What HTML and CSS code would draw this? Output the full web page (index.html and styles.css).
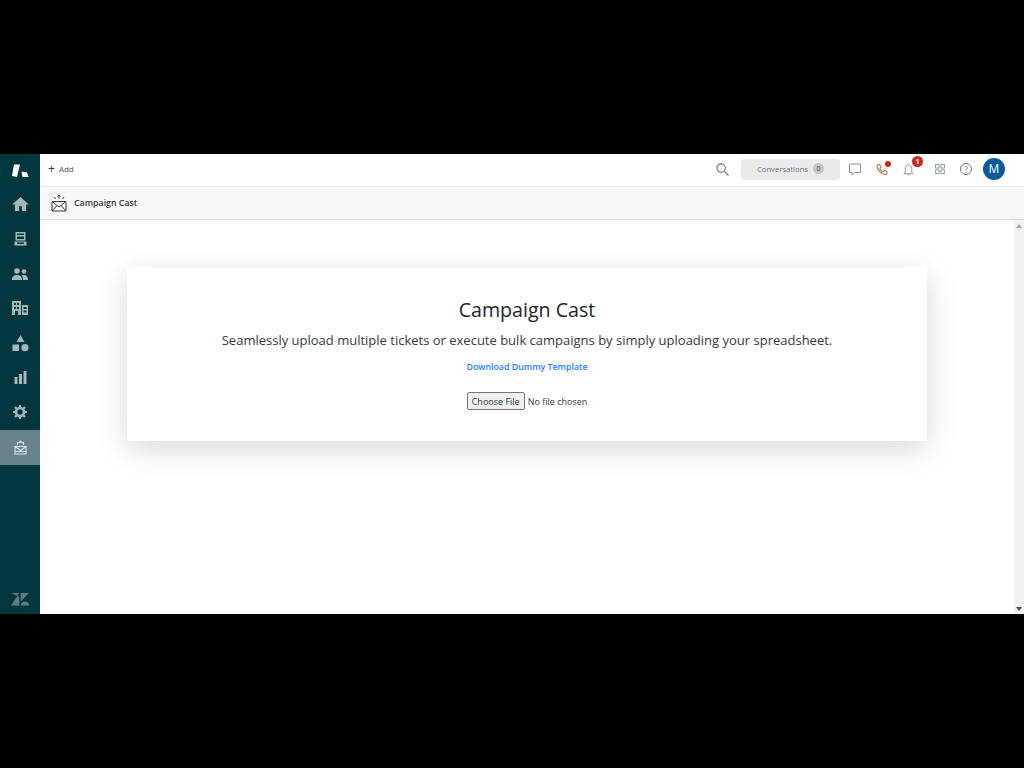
FILE: index.html
```html
<!DOCTYPE html>
<html lang="en">
<head>
  <meta charset="UTF-8">
  <title>Campaign Cast</title>
  <link rel="stylesheet" href="styles.css">
</head>
<body>
  <div class="app">
    <div class="sidebar">
      <div class="nav-item logo">
        <svg width="20" height="18" viewBox="0 0 20 18"><path d="M4 2.500 10 2.500 7 15 2 14Z" fill="#fff"/><path d="M11.500 9.500 17 10.500 18.500 15 12.500 15Z" fill="#fff"/></svg>
      </div>
      <div class="nav-item">
        <svg width="17" height="14" viewBox="0 0 18 15"><path d="M9 0 0 8H3V15H7.500V10H10.500V15H15V8H18Z" fill="#a6b7ba"/></svg>
      </div>
      <div class="nav-item">
        <svg width="13" height="14" viewBox="0 0 13 14"><path d="M1.500 0H11.500V8.500H1.500ZM3 1.500V3H10V1.500ZM3 4.500V7H10V4.500ZM0.500 9.500H12.500V13.500H0.500ZM3 10.500V12H10V10.500Z" fill="#a6b7ba" fill-rule="evenodd"/></svg>
      </div>
      <div class="nav-item">
        <svg width="16" height="12" viewBox="0 0 16 12"><circle cx="5" cy="3" r="2.800" fill="#a6b7ba"/><circle cx="12" cy="3.500" r="2.300" fill="#a6b7ba"/><path d="M0 12C0 8 2 7 5 7S10 8 10 12ZM11 12C11 9.500 10.500 8.500 9.500 7.500 10.500 7 11 7 12 7 14.500 7 16 8.500 16 12Z" fill="#a6b7ba"/></svg>
      </div>
      <div class="nav-item">
        <svg width="16" height="14" viewBox="0 0 16 14"><path d="M0 0H9V14H0ZM2 2V4H4V2ZM5 2V4H7V2ZM2 6V8H4V6ZM5 6V8H7V6ZM3 10V14H6V10ZM10 4H16V14H10ZM11.500 6V8H14.500V6ZM11.500 9.500V11.500H14.500V9.500Z" fill="#a6b7ba" fill-rule="evenodd"/></svg>
      </div>
      <div class="nav-item">
        <svg width="17" height="17" viewBox="0 0 17 17"><path d="M8.500 0 12.500 7H4.500Z" fill="#a6b7ba"/><rect x="0.500" y="9.500" width="6.500" height="6.500" fill="#a6b7ba"/><circle cx="13" cy="12.700" r="3.600" fill="#a6b7ba"/></svg>
      </div>
      <div class="nav-item">
        <svg width="13" height="13" viewBox="0 0 13 13"><rect x="0.500" y="6" width="3" height="7" fill="#a6b7ba"/><rect x="5" y="3" width="3" height="10" fill="#a6b7ba"/><rect x="9.500" y="0" width="3" height="13" fill="#a6b7ba"/></svg>
      </div>
      <div class="nav-item">
        <svg width="14" height="14" viewBox="0 0 14 14"><circle cx="7" cy="7" r="4" fill="none" stroke="#a6b7ba" stroke-width="2.600"/><path d="M7 0V2M7 12V14M0 7H2M12 7H14M2 2 3.400 3.400M10.600 10.600 12 12M12 2 10.600 3.400M3.400 10.600 2 12" stroke="#a6b7ba" stroke-width="2.200"/></svg>
      </div>
      <div class="nav-item active">
        <svg width="13" height="15" viewBox="0 0 13 15"><path d="M1 6.500H12V14H1ZM1 6.500 6.500 10.500 12 6.500M1 11.500H12M3.500 5V2.500H9.500V5" fill="none" stroke="#dfe6e7" stroke-width="1.100"/><circle cx="6.500" cy="1.500" r="1.100" fill="#dfe6e7"/></svg>
      </div>
      <div class="sidebar-foot">
        <svg width="18" height="13" viewBox="0 0 18 13"><path d="M0 0H8.300L0 12.500H8.300V4ZM9.700 0H18L9.700 8.500ZM9.700 12.500C10 10 11.800 8.500 14 8.500S18 10 18 12.500Z" fill="#5f7c82" fill-rule="evenodd"/></svg>
      </div>
    </div>
    <div class="main">
      <div class="topbar">
        <div class="add-btn"><span class="plus">+</span><span>Add</span></div>
        <div class="top-right">
          <svg class="top-search" width="13" height="13" viewBox="0 0 14 14"><circle cx="5.500" cy="5.500" r="4.500" fill="none" stroke="#68737d" stroke-width="1.200"/><path d="M9 9 13.500 13.500" stroke="#68737d" stroke-width="1.300"/></svg>
          <div class="conv-btn">Conversations <span class="conv-count">0</span></div>
          <div class="top-icon">
            <svg width="12" height="13" viewBox="0 0 12 13"><path d="M.5 1H11.500V9.500H5.500L3 12V9.500H.5Z" fill="none" stroke="#87929d"/></svg>
          </div>
          <div class="top-icon">
            <svg width="12" height="13" viewBox="0 0 14 14"><path d="M2 1.500 4 1 6 4 4.500 5.500C5 7 7 9 8.500 9.500L10 8 13 10 12.500 12C12 13 10.500 13 9 12.500 5.500 11 3 8.500 1.500 5 1 4 1 2.500 2 1.500Z" fill="none" stroke="#b4714f" stroke-width="1.200"/></svg>
            <span class="dot"></span>
          </div>
          <div class="top-icon">
            <svg width="13" height="13" viewBox="0 0 14 14"><path d="M3.500 10V6C3.500 3.800 5 2 7 2S10.500 3.800 10.500 6V10L12 11.500H2ZM5.800 12.500C6 13.300 8 13.300 8.200 12.500" fill="none" stroke="#87929d"/></svg>
            <span class="badge">1</span>
          </div>
          <div class="top-icon grid-icon">
            <svg width="10" height="10" viewBox="0 0 11 11"><path d="M.5.500H4.500V4.500H.5ZM6.500.500H10.500V4.500H6.500ZM.5 6.500H4.500V10.500H.5ZM6.500 6.500H10.500V10.500H6.500Z" fill="none" stroke="#87929d"/></svg>
          </div>
          <div class="top-icon help">?</div>
          <div class="avatar">M</div>
        </div>
      </div>
      <div class="subbar">
        <svg width="16" height="18" viewBox="0 0 16 18"><path d="M1 7.500H15V17H1ZM1 7.500 8 13 15 7.500M1 17 6 11.500M15 17 10 11.500" fill="none" stroke="#2f3941"/><path d="M8 1V4.500M6.500 2.500 8 1 9.500 2.500M3 3 4.500 5M13 3 11.500 5" fill="none" stroke="#2f3941"/></svg>
        <span class="subbar-title">Campaign Cast</span>
      </div>
      <div class="content">
        <div class="page">
          <div class="card">
            <h1>Campaign Cast</h1>
            <p class="lead">Seamlessly upload multiple tickets or execute bulk campaigns by simply uploading your spreadsheet.</p>
            <a class="template-link" href="#">Download Dummy Template</a>
            <div class="file-row">
              <button class="file-btn" type="button">Choose File</button>
              <span class="file-name">No file chosen</span>
            </div>
          </div>
        </div>
        <div class="scrollbar">
          <span class="arrow up"></span>
          <span class="arrow down"></span>
        </div>
      </div>
    </div>
  </div>
</body>
</html>
```

FILE: styles.css
```css
*{
  box-sizing: border-box;
}

body{
  margin: 0;
  height: 768px;
  padding: 154px 0;
  background-color: #000;
  font-family: "Open Sans", "Noto Sans", sans-serif;
  overflow: hidden;
}

.app{
  display: flex;
  height: 460px;
  background-color: #fff;
}

.sidebar{
  display: flex;
  flex-direction: column;
  width: 40px;
  background-color: #03363d;
  flex-shrink: 0;
}

.nav-item{
  display: flex;
  align-items: center;
  justify-content: center;
  height: 34.700px;
}

.logo{
  height: 33px;
}

.active{
  background-color: #68838a;
}

.sidebar-foot{
  display: flex;
  justify-content: center;
  margin-top: auto;
  padding-bottom: 8px;
}

.main{
  display: flex;
  flex-direction: column;
  flex: 1;
  min-width: 0;
}

.topbar{
  display: flex;
  align-items: center;
  justify-content: space-between;
  height: 32px;
  padding: 0 19px 2px 8px;
  background-color: #fff;
}

.add-btn{
  display: flex;
  align-items: center;
  gap: 4px;
  font-size: 8px;
  line-height: 12px;
  color: #49545c;
}

.plus{
  font-size: 12px;
  color: #2f3941;
}

.top-right{
  display: flex;
  align-items: center;
}

.top-search{
  margin-right: 12px;
}

.conv-btn{
  display: flex;
  align-items: center;
  justify-content: center;
  gap: 5px;
  width: 99px;
  height: 21px;
  margin-right: 1px;
  padding-bottom: 1px;
  font-size: 7.700px;
  color: #68737d;
  background-color: #e9ebed;
  border-radius: 3px;
}

.conv-count{
  width: 11px;
  height: 11px;
  line-height: 11px;
  font-size: 7px;
  text-align: center;
  color: #49545c;
  background-color: #c2c8cc;
  border-radius: 50%;
}

.top-icon{
  position: relative;
  display: flex;
  align-items: center;
  justify-content: center;
  width: 27px;
  height: 20px;
}

.grid-icon{
  margin-left: 4px;
}

.dot{
  position: absolute;
  top: 2px;
  right: 4px;
  width: 6px;
  height: 6px;
  background-color: #c72a1c;
  border-radius: 50%;
}

.badge{
  position: absolute;
  top: -3px;
  right: -1px;
  width: 11px;
  height: 11px;
  line-height: 11px;
  font-size: 7px;
  font-weight: 700;
  text-align: center;
  color: #fff;
  background-color: #c72a1c;
  border-radius: 50%;
}

.help{
  width: 12px;
  height: 12px;
  margin: 0 7px 0 7px;
  font-size: 8.500px;
  color: #68737d;
  border: 1px solid #68737d;
  border-radius: 50%;
}

.avatar{
  width: 22px;
  height: 22px;
  margin-left: 4px;
  line-height: 22px;
  font-size: 12px;
  text-align: center;
  color: #fff;
  background-color: #0a5a9c;
  border-radius: 50%;
}

.subbar{
  display: flex;
  align-items: center;
  gap: 7px;
  height: 34px;
  padding-left: 11px;
  background-color: #f8f8f8;
  border-top: 1px solid #eeeeee;
  border-bottom: 1px solid #d8dcde;
}

.subbar-title{
  font-size: 8.800px;
  font-weight: 600;
  color: #2f3941;
}

.content{
  display: flex;
  flex: 1;
  min-height: 0;
}

.page{
  flex: 1;
  padding: 47px 87px 0 87px;
}

.card{
  display: flex;
  flex-direction: column;
  align-items: center;
  height: 174px;
  padding-top: 29px;
  background-color: #fff;
  box-shadow: 0 8px 30px rgba(0, 0, 0, 0.15);
}

h1{
  margin: 0;
  font-size: 19.600px;
  font-weight: 500;
  line-height: 27px;
  color: #212529;
}

.lead{
  margin: 7px 0 0 0;
  font-size: 13px;
  font-weight: 500;
  line-height: 21px;
  color: #343a40;
}

.template-link{
  margin-top: 10px;
  font-size: 8.800px;
  font-weight: 600;
  color: #1f80ff;
  text-decoration: none;
}

.file-row{
  display: flex;
  align-items: center;
  margin-top: 19px;
  gap: 3px;
}

.file-btn{
  width: 58px;
  height: 18px;
  padding: 0;
  font-family: inherit;
  font-size: 9px;
  color: #343a40;
  background-color: #efefef;
  border: 1px solid #767676;
  border-radius: 2px;
}

.file-name{
  font-size: 9px;
  color: #343a40;
}

.scrollbar{
  position: relative;
  width: 10px;
  background-color: #f1f1f1;
}

.arrow{
  position: absolute;
  left: 2px;
  width: 0;
  height: 0;
  border-left: 3px solid transparent;
  border-right: 3px solid transparent;
}

.up{
  top: 4px;
  border-bottom: 4px solid #a3a3a3;
}

.down{
  bottom: 3px;
  border-top: 4px solid #505050;
}
```
